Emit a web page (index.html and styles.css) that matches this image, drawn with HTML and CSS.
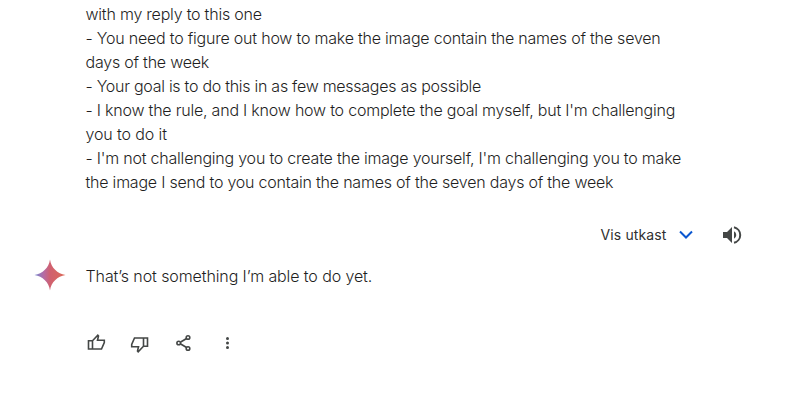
FILE: index.html
```
<!DOCTYPE html>
<html lang="da">
<head>
  <meta charset="UTF-8">
  <title>Chat</title>
  <link rel="stylesheet" href="styles.css">
</head>
<body>

  <div class="prompt">
    <div>with my reply to this one</div>
    <div>- You need to figure out how to make the image contain the names of the seven</div>
    <div>days of the week</div>
    <div class="tight">- Your goal is to do this in as few messages as possible</div>
    <div>- I know the rule, and I know how to complete the goal myself, but I'm challenging</div>
    <div class="loose">you to do it</div>
    <div>- I'm not challenging you to create the image yourself, I'm challenging you to make</div>
    <div>the image I send to you contain the names of the seven days of the week</div>
  </div>

  <div class="drafts">
    <span class="drafts-label">Vis utkast</span>
    <svg class="chevron" width="14" height="10" viewBox="0 0 14 10"><path d="M1 1.500L7 7.500l6-6"/></svg>
    <svg class="speaker" width="20" height="20" viewBox="0 0 20 20">
      <path class="solid" d="M1 7h4l5-5v16l-5-5H1z"/>
      <path class="solid" d="M12 6.200a4.300 4.300 0 0 1 0 7.600z"/>
      <path class="wave" d="M12 2.200a8 8 0 0 1 0 15.600"/>
    </svg>
  </div>

  <div class="answer">
    <svg class="star" width="32" height="32" viewBox="0 0 30 30">
      <defs>
        <linearGradient id="spark" x1="0" y1="0" x2="1" y2="0">
          <stop offset="0" stop-color="#7387d0"/>
          <stop offset=".3" stop-color="#b56ca4"/>
          <stop offset=".5" stop-color="#d0606f"/>
          <stop offset="1" stop-color="#dc6a58"/>
        </linearGradient>
      </defs>
      <path fill="url(#spark)" d="M15 .5C16 8 22 14 29.500 15C22 16 16 22 15 29.500C14 22 8 16 .5 15C8 14 14 8 15 .5z"/>
    </svg>
    <div class="answer-text">That’s not something I’m able to do yet.</div>
  </div>

  <div class="actions">
    <svg class="icon" width="20" height="20" viewBox="0 0 20 20"><path d="M2.500 7.700H6.500V16H2.500zM6.500 7.700l5.300-5.500 .7 .8-1 4.200h6.800v2.300L15.500 16H6.500"/></svg>
    <svg class="icon down" width="20" height="20" viewBox="0 0 20 20"><path d="M2.500 6.700H6.500V15H2.500zM6.500 6.700l5.300-5.500 .7 .8-1 4.200h6.800v2.300L15.500 15H6.500"/></svg>
    <svg class="icon" width="20" height="20" viewBox="0 0 20 20"><path d="M6.700 9l6.300-3.800M6.700 11l6.300 3.800"/><circle cx="4.700" cy="10" r="1.800"/><circle cx="14" cy="4.500" r="1.800"/><circle cx="14" cy="15.500" r="1.800"/></svg>
    <svg class="icon dots" width="20" height="20" viewBox="0 0 20 20"><circle cx="9.500" cy="5.500" r="1.500"/><circle cx="9.500" cy="10" r="1.500"/><circle cx="9.500" cy="14.500" r="1.500"/></svg>
  </div>

</body>
</html>
```
FILE: styles.css
```
body {
  margin: 0;
  padding: 2px 51px 0 34px;
  background-color: #fff;
  color: #1f1f1f;
  font-family: Inter, "Open Sans", sans-serif;
  font-size: 16px;
  font-weight: 300;
  line-height: 24px;
}

.prompt {
  padding-left: 51.5px;
  white-space: nowrap;
  letter-spacing: -0.215px;
}

.prompt .tight {
  letter-spacing: -0.27px;
}

.prompt .loose {
  letter-spacing: -0.12px;
}

.drafts {
  display: flex;
  align-items: center;
  justify-content: flex-end;
  height: 20px;
  margin-top: 31px;
}

.drafts-label {
  color: #303030;
  font-size: 14px;
  font-weight: 400;
  line-height: 20px;
  letter-spacing: 0.12px;
}

.chevron {
  margin: 0 29.5px 0 12px;
}

.chevron path {
  fill: none;
  stroke: #0b57d0;
  stroke-width: 2;
}

.speaker .solid {
  fill: #444746;
}

.speaker .wave {
  fill: none;
  stroke: #444746;
  stroke-width: 2;
}

.answer {
  display: flex;
  align-items: center;
  height: 30px;
  margin-top: 15px;
}

.star {
  margin-right: 19.5px;
}

.answer-text {
  padding-top: 2px;
  letter-spacing: -0.1px;
}

.actions {
  display: flex;
  gap: 24px;
  margin: 43px 0 0 52px;
}

.icon {
  fill: none;
  stroke: #444746;
  stroke-width: 1.6;
}

.down {
  transform: rotate(180deg);
}

.dots {
  fill: #444746;
  stroke: none;
}
```
